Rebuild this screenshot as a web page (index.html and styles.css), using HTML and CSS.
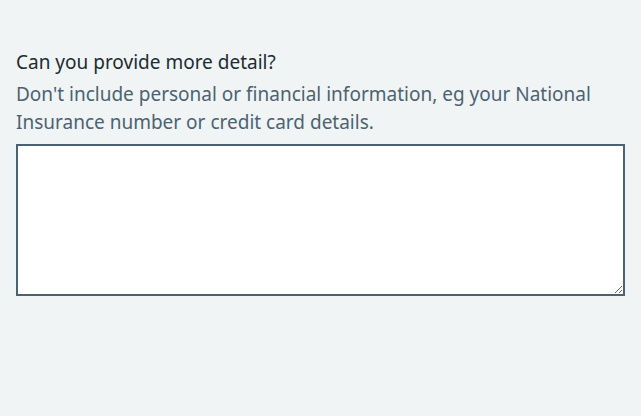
FILE: index.html
```html
<!DOCTYPE html>
<html>
<head>
<meta charset="utf-8">
<link rel="stylesheet" href="styles.css">
</head>
<body>
<div class="form-group">
  <label class="label" for="more-detail">Can you provide more detail?</label>
  <div class="hint">Don't include personal or financial information, eg your National Insurance number or credit card details.</div>
  <textarea class="textarea" id="more-detail" rows="5"></textarea>
</div>
</body>
</html>
```
FILE: styles.css
```css
html, body {
  margin: 0;
  background: #f0f4f5;
}
body {
  padding: 48px 16px 0;
  font-family: "Noto Sans", sans-serif;
  font-size: 19px;
  line-height: 28px;
  color: #212b32;
}
.form-group {
  display: flex;
  flex-direction: column;
}
.label {
  display: block;
  margin-bottom: 4px;
}
.hint {
  color: #4c6272;
  margin-bottom: 8px;
}
.textarea {
  box-sizing: border-box;
  width: 100%;
  height: 152px;
  border: 2px solid #4c6272;
  border-radius: 0;
  background: #fff;
  margin: 0;
  padding: 4px;
  font: inherit;
}
```
